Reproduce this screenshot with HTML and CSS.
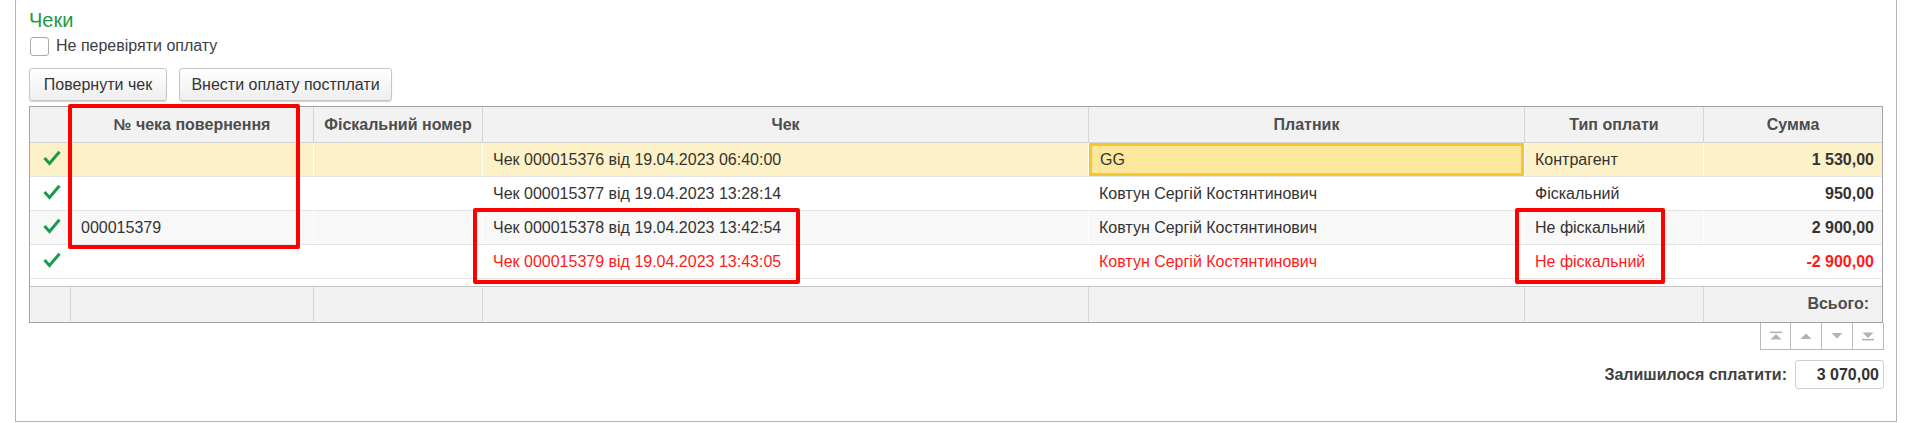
FILE: index.html
```html
<!DOCTYPE html>
<html lang="uk">
<head>
<meta charset="utf-8">
<title>Чеки</title>
<link rel="stylesheet" href="styles.css">
</head>
<body>
<div class="panel">
  <div class="title">Чеки</div>
  <label class="check-row"><span class="checkbox"></span><span>Не перевіряти оплату</span></label>
  <div class="buttons">
    <button class="btn btn-return">Повернути чек</button>
    <button class="btn btn-post">Внести оплату постплати</button>
  </div>

  <div class="grid">
    <div class="row head">
      <div class="c"></div>
      <div class="c">№ чека повернення</div>
      <div class="c">Фіскальний номер</div>
      <div class="c">Чек</div>
      <div class="c">Платник</div>
      <div class="c">Тип оплати</div>
      <div class="c">Сумма</div>
    </div>
    <div class="body">
      <div class="row r sel">
        <div class="c ic"><svg class="ok" viewBox="0 0 18 16"><path d="M1.5 8 L6.5 13.5 L16.5 1.8"/></svg></div>
        <div class="c"></div>
        <div class="c"></div>
        <div class="c">Чек 000015376 від 19.04.2023 06:40:00</div>
        <div class="c cur">GG</div>
        <div class="c">Контрагент</div>
        <div class="c num">1 530,00</div>
      </div>
      <div class="row r">
        <div class="c ic"><svg class="ok" viewBox="0 0 18 16"><path d="M1.5 8 L6.5 13.5 L16.5 1.8"/></svg></div>
        <div class="c"></div>
        <div class="c"></div>
        <div class="c">Чек 000015377 від 19.04.2023 13:28:14</div>
        <div class="c">Ковтун Сергій Костянтинович</div>
        <div class="c">Фіскальний</div>
        <div class="c num">950,00</div>
      </div>
      <div class="row r alt">
        <div class="c ic"><svg class="ok" viewBox="0 0 18 16"><path d="M1.5 8 L6.5 13.5 L16.5 1.8"/></svg></div>
        <div class="c">000015379</div>
        <div class="c"></div>
        <div class="c">Чек 000015378 від 19.04.2023 13:42:54</div>
        <div class="c">Ковтун Сергій Костянтинович</div>
        <div class="c">Не фіскальний</div>
        <div class="c num">2 900,00</div>
      </div>
      <div class="row r red">
        <div class="c ic"><svg class="ok" viewBox="0 0 18 16"><path d="M1.5 8 L6.5 13.5 L16.5 1.8"/></svg></div>
        <div class="c"></div>
        <div class="c"></div>
        <div class="c">Чек 000015379 від 19.04.2023 13:43:05</div>
        <div class="c">Ковтун Сергій Костянтинович</div>
        <div class="c">Не фіскальний</div>
        <div class="c num">-2 900,00</div>
      </div>
    </div>
    <div class="row foot">
      <div class="c"></div>
      <div class="c"></div>
      <div class="c"></div>
      <div class="c"></div>
      <div class="c"></div>
      <div class="c"></div>
      <div class="c num">Всього:</div>
    </div>
  </div>

  <div class="nav">
    <span class="nb"><svg viewBox="0 0 14 10"><rect x="1" y="0.5" width="12" height="1.6"/><path d="M7 3 L12.5 8.5 H1.5 Z"/></svg></span>
    <span class="nb"><svg viewBox="0 0 14 10"><path d="M7 2.5 L12.5 8 H1.5 Z"/></svg></span>
    <span class="nb"><svg viewBox="0 0 14 10"><path d="M1.5 2 H12.5 L7 7.5 Z"/></svg></span>
    <span class="nb"><svg viewBox="0 0 14 10"><path d="M1.5 1.5 H12.5 L7 7 Z"/><rect x="1" y="7.9" width="12" height="1.6"/></svg></span>
  </div>

  <div class="total">
    <span class="total-label">Залишилося сплатити:</span>
    <span class="total-field">3 070,00</span>
  </div>

  <div class="mark mark-ret"></div>
  <div class="mark mark-check"></div>
  <div class="mark mark-type"></div>
</div>
</body>
</html>
```

FILE: styles.css
```css
* { box-sizing: border-box; }

html, body {
  margin: 0;
  padding: 0;
  background: #fff;
}

body {
  font-family: "Liberation Sans", Arial, sans-serif;
  font-size: 16px;
  color: #333;
}

.panel {
  position: relative;
  margin-left: 15px;
  width: 1882px;
  height: 422px;
  border: 1px solid #b5b5b5;
  border-top: none;
  padding: 9px 13px 0 13px;
}

.title {
  font-size: 20px;
  line-height: 23px;
  color: #1d9a4a;
}

.check-row {
  display: flex;
  align-items: center;
  gap: 7px;
  margin-top: 4px;
  height: 20px;
  line-height: 20px;
  color: #404040;
}

.checkbox {
  display: inline-block;
  width: 19px;
  height: 19px;
  margin-left: 1px;
  border: 1px solid #a9a9a9;
  border-radius: 3px;
  background: #fff;
}

.buttons {
  display: flex;
  gap: 12px;
  margin-top: 12px;
}

.btn {
  height: 33px;
  padding: 0;
  white-space: nowrap;
  text-align: center;
  font-family: inherit;
  font-size: 16px;
  color: #333;
  background: linear-gradient(#ffffff, #eeeeee);
  border: 1px solid #c6c6c6;
  border-radius: 3px;
  box-shadow: 0 1px 1px rgba(0, 0, 0, 0.18);
}

.btn-return { width: 138px; }
.btn-post { width: 213px; }

.grid {
  margin-top: 5px;
  width: 1854px;
  border: 1px solid #a3a3a3;
}

.row {
  display: grid;
  grid-template-columns: 40px 243px 169px 606px 436px 179px 179px;
}

.row .c {
  border-left: 1px solid #fff;
  display: flex;
  align-items: center;
  padding: 0 10px;
  white-space: nowrap;
  overflow: hidden;
}

.row .c:first-child { border-left: none; }

.head {
  height: 36px;
  background: #f2f2f2;
  border-bottom: 1px solid #d2d2d2;
}

.head .c {
  justify-content: center;
  font-weight: bold;
  color: #4d4d4d;
  border-left-color: #d6d6d6;
}

.body {
  height: 143px;
  background: #fff;
}

.r {
  height: 34px;
  border-bottom: 1px solid #e4e4e4;
}

.r.sel { background: #fdf1c7; }
.r.alt { background: #f8f8f8; }
.r.red { color: #ff1a1a; }

.c.ic {
  justify-content: center;
  padding: 0 0 3px 4px;
}

.ok {
  width: 18px;
  height: 16px;
}

.ok path {
  fill: none;
  stroke: #1a9a4c;
  stroke-width: 3;
  stroke-linecap: butt;
  stroke-linejoin: miter;
}

.c.num {
  justify-content: flex-end;
  font-weight: bold;
  padding-right: 8px;
}

.c.cur {
  background: #fde79d;
  box-shadow: inset 0 0 0 3px #f6c62c;
  padding-left: 11px;
}

.foot {
  height: 36px;
  background: #f2f2f2;
  border-top: 1px solid #c4c4c4;
}

.foot .c {
  border-left-color: #d6d6d6;
  align-items: flex-start;
  padding-top: 8px;
  color: #4d4d4d;
}

.foot .c.num { padding-right: 13px; }

.nav {
  display: flex;
  justify-content: flex-end;
  width: 1855px;
}

.nb {
  width: 31px;
  height: 27px;
  border: 1px solid #b9b9b9;
  border-top: none;
  border-left: none;
  display: flex;
  align-items: center;
  justify-content: center;
}

.nb:first-child { border-left: 1px solid #b9b9b9; }

.nb svg {
  width: 14px;
  height: 10px;
  fill: #b3b3b3;
}

.total {
  display: flex;
  justify-content: flex-end;
  align-items: center;
  gap: 8px;
  margin-top: 10px;
  width: 1855px;
}

.total-label {
  font-weight: bold;
  color: #404040;
}

.total-field {
  width: 89px;
  height: 29px;
  border: 1px solid #cfcfcf;
  border-radius: 3px;
  font-weight: bold;
  display: flex;
  align-items: center;
  justify-content: flex-end;
  padding-right: 4px;
  color: #333;
}

.mark {
  position: absolute;
  border: 4px solid #ff0000;
  border-radius: 2px;
}

.mark-ret { left: 52px; top: 104px; width: 232px; height: 145px; }
.mark-check { left: 457px; top: 208px; width: 327px; height: 76px; }
.mark-type { left: 1499px; top: 208px; width: 150px; height: 76px; }
```
